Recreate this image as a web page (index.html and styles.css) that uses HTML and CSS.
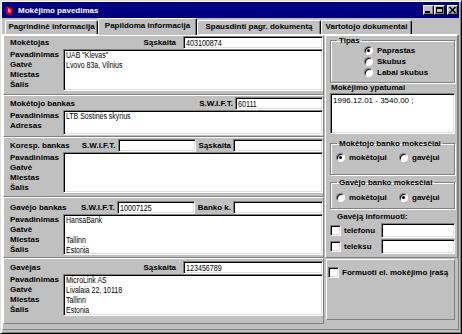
FILE: index.html
```html
<!DOCTYPE html>
<html lang="lt">

<head>
    <meta charset="UTF-8">
    <title>Mokėjimo pavedimas</title>
    <link rel="stylesheet" href="styles.css">
</head>

<body>

    <div class="window">

        <header class="titlebar">
            <svg class="app-icon" width="11" height="11" viewBox="0 0 11 11">
                <polygon points="0,5 5,1 5,9" fill="#0000c0" />
                <polygon points="4,1 10,4 8,10 3,9" fill="#e00000" />
                <polygon points="5,3 8,5 7,8 5,7" fill="#ff8080" />
            </svg>
            <span class="title">Mokėjimo pavedimas</span>
            <div class="caption">
                <span class="cbtn">
                    <svg width="9" height="8" viewBox="0 0 9 8"><rect x="1" y="5" width="5" height="2" fill="#000" /></svg>
                </span>
                <span class="cbtn">
                    <svg width="9" height="8" viewBox="0 0 9 8"><rect x="1.5" y="1.5" width="6" height="5" fill="none" stroke="#000" /><rect x="1" y="1" width="7" height="2" fill="#000" /></svg>
                </span>
                <span class="cbtn luk">
                    <svg width="9" height="8" viewBox="0 0 9 8"><path d="M1.5 1 L7.5 7 M7.5 1 L1.5 7" stroke="#000" stroke-width="1.6" /></svg>
                </span>
            </div>
        </header>

        <nav class="tabs">
            <span class="tab t1">Pagrindinė informacija</span>
            <span class="tab t2 valgt">Papildoma informacija</span>
            <span class="tab t3">Spausdinti pagr. dokumentą</span>
            <span class="tab t4">Vartotojo dokumentai</span>
        </nav>

        <div class="page">

            <!-- KAIRĖ -->
            <div class="left">

                <section class="panel s1">
                    <div class="head">
                        <b class="name">Mokėtojas</b>
                        <b class="lbl sask">Sąskaita</b>
                        <span class="field f140"><span class="v">403100874</span></span>
                    </div>
                    <div class="rows">
                        <div class="labels">
                            <div>Pavadinimas</div>
                            <div>Gatvė</div>
                            <div>Miestas</div>
                            <div>Šalis</div>
                        </div>
                        <div class="memo h42">
                            <div>UAB "Klevas"</div>
                            <div>Lvovo 83a, Vilnius</div>
                        </div>
                    </div>
                </section>

                <section class="panel s2">
                    <div class="head">
                        <b class="name">Mokėtojo bankas</b>
                        <b class="lbl swift">S.W.I.F.T.</b>
                        <span class="field f88"><span class="v">60111</span></span>
                    </div>
                    <div class="rows">
                        <div class="labels">
                            <div>Pavadinimas</div>
                            <div>Adresas</div>
                        </div>
                        <div class="memo h25">
                            <div>LTB Sostinės skyrius</div>
                        </div>
                    </div>
                </section>

                <section class="panel s3">
                    <div class="head">
                        <b class="name">Koresp. bankas</b>
                        <b class="lbl swift">S.W.I.F.T.</b>
                        <span class="field f78"></span>
                        <b class="lbl mid">Sąskaita</b>
                        <span class="field f90"></span>
                    </div>
                    <div class="rows">
                        <div class="labels">
                            <div>Pavadinimas</div>
                            <div>Gatvė</div>
                            <div>Miestas</div>
                            <div>Šalis</div>
                        </div>
                        <div class="memo h41"></div>
                    </div>
                </section>

                <section class="panel s4">
                    <div class="head">
                        <b class="name">Gavėjo bankas</b>
                        <b class="lbl swift">S.W.I.F.T.</b>
                        <span class="field f78"><span class="v">10007125</span></span>
                        <b class="lbl mid">Banko k.</b>
                        <span class="field f90"></span>
                    </div>
                    <div class="rows">
                        <div class="labels">
                            <div>Pavadinimas</div>
                            <div>Gatvė</div>
                            <div>Miestas</div>
                            <div>Šalis</div>
                        </div>
                        <div class="memo h41">
                            <div>HansaBank</div>
                            <div></div>
                            <div>Tallinn</div>
                            <div>Estonia</div>
                        </div>
                    </div>
                </section>

                <section class="panel s5">
                    <div class="head">
                        <b class="name">Gavėjas</b>
                        <b class="lbl sask">Sąskaita</b>
                        <span class="field f140"><span class="v">123456789</span></span>
                    </div>
                    <div class="rows">
                        <div class="labels">
                            <div>Pavadinimas</div>
                            <div>Gatvė</div>
                            <div>Miestas</div>
                            <div>Šalis</div>
                        </div>
                        <div class="memo h42">
                            <div>MicroLink AS</div>
                            <div>Livalaia 22, 10118</div>
                            <div>Tallinn</div>
                            <div>Estonia</div>
                        </div>
                    </div>
                </section>

            </div>

            <!-- DEŠINĖ -->
            <div class="right">

                <div class="panel upper">

                    <fieldset class="group tipas">
                        <legend>Tipas</legend>
                        <div class="opt"><span class="radio on"></span>Paprastas</div>
                        <div class="opt"><span class="radio"></span>Skubus</div>
                        <div class="opt"><span class="radio"></span>Labai skubus</div>
                    </fieldset>

                    <b class="cap ypat">Mokėjimo ypatumai</b>
                    <div class="memo notes">1996.12.01 - 3540.00 ;</div>

                    <fieldset class="group mok1">
                        <legend>Mokėtojo banko mokesčiai</legend>
                        <div class="pair">
                            <div class="opt"><span class="radio on"></span>mokėtojui</div>
                            <div class="opt"><span class="radio"></span>gavėjui</div>
                        </div>
                    </fieldset>

                    <fieldset class="group mok2">
                        <legend>Gavėjo banko mokesčiai</legend>
                        <div class="pair">
                            <div class="opt"><span class="radio"></span>mokėtojui</div>
                            <div class="opt"><span class="radio on"></span>gavėjui</div>
                        </div>
                    </fieldset>

                    <b class="cap inform">Gavėją informuoti:</b>
                    <div class="chkrow">
                        <span class="check"></span><b>telefonu</b>
                        <span class="field f73"></span>
                    </div>
                    <div class="chkrow">
                        <span class="check"></span><b>teleksu</b>
                        <span class="field f73"></span>
                    </div>

                </div>

                <div class="panel lower">
                    <div class="chkrow">
                        <span class="check"></span><b>Formuoti el. mokėjimo įrašą</b>
                    </div>
                </div>

            </div>

        </div>

    </div>

</body>

</html>
```

FILE: styles.css
```css
body {
    margin: 0;
    background: #c0c0c0;
    font-family: "Liberation Sans", Arial, sans-serif;
}

b {
    font-weight: bold;
}

.window {
    width: 462px;
    height: 334px;
    box-sizing: border-box;
    background: #c0c0c0;
    border: 1px solid;
    border-color: #dfdfdf #000 #000 #dfdfdf;
    box-shadow: inset 1px 1px #fff, inset -1px -1px #808080;
    padding: 1px 2px 3px 1px;
    display: flex;
    flex-direction: column;
    font-size: 8px;
}


/* TITLE */

.titlebar {
    height: 16px;
    background: #000080;
    color: #fff;
    display: flex;
    align-items: center;
    padding: 0 1px 0 1px;
}

.app-icon {
    margin-right: 4px;
}

.title {
    flex: 1;
    font-weight: bold;
    font-size: 8px;
}

.caption {
    display: flex;
}

.cbtn {
    width: 11px;
    height: 10px;
    box-sizing: border-box;
    background: #c0c0c0;
    border: 1px solid;
    border-color: #fff #000 #000 #fff;
    box-shadow: inset -1px -1px #808080;
    display: flex;
    align-items: center;
    justify-content: center;
}

.cbtn svg {
    display: block;
}

.luk {
    margin-left: 2px;
}


/* TABS */

.tabs {
    height: 16px;
    display: flex;
    align-items: flex-end;
    padding-left: 3px;
}

.tab {
    height: 14px;
    box-sizing: border-box;
    border: 1px solid;
    border-bottom: none;
    border-color: #fff #000 transparent #fff;
    box-shadow: inset -1px 0 #808080;
    border-radius: 2px 2px 0 0;
    font-weight: bold;
    line-height: 12px;
    text-align: center;
    white-space: nowrap;
}

.t1 { width: 93px; }
.t2 { width: 99px; }
.t3 { width: 124px; }
.t4 { width: 91px; }

.valgt {
    height: 17px;
    margin-bottom: -1px;
    line-height: 14px;
    background: #c0c0c0;
    position: relative;
    z-index: 1;
}


/* PAGE */

.page {
    flex: 1;
    display: flex;
    gap: 1px;
    border: 1px solid;
    border-color: #fff #808080 #808080 #fff;
}

.left {
    flex: none;
    width: 321px;
    display: flex;
    flex-direction: column;
}

.panel {
    box-sizing: border-box;
    border: 1px solid;
    border-color: #fff #808080 #808080 #fff;
}

.s1 { height: 60px; }
.s2 { height: 42px; padding-top: 1px; }
.s3 { height: 60px; padding-top: 1px; }
.s4 { height: 61px; padding-top: 3px; }
.s5 { height: 66px; padding-top: 2px; }

.head {
    height: 13px;
    display: flex;
    align-items: center;
    padding-left: 6px;
}

.name {
    flex: 1;
    white-space: nowrap;
}

.lbl {
    white-space: nowrap;
}

.sask { margin-right: 7px; }
.swift { margin-right: 2px; }
.mid { margin: 0 2px 0 3px; }

.field {
    flex: none;
    height: 13px;
    box-sizing: border-box;
    background: #fff;
    border: 1px solid;
    border-color: #808080 #fff #fff #808080;
    box-shadow: inset 1px 1px #000, inset -1px -1px #dfdfdf;
    padding: 1px 0 0 2px;
    font-size: 8.5px;
    font-weight: normal;
    line-height: 10px;
    overflow: hidden;
}

.v {
    display: inline-block;
    white-space: nowrap;
    transform: scaleX(0.84);
    transform-origin: 0 0;
}

.f140 { width: 140px; }
.f88 { width: 88px; }
.f78 { width: 78px; }
.f90 { width: 90px; }
.f73 { width: 74px; height: 15px; }

.rows {
    display: flex;
}

.labels {
    width: 59px;
    box-sizing: border-box;
    padding: 1px 0 0 6px;
    font-weight: bold;
    line-height: 10px;
    white-space: nowrap;
}

.memo {
    flex: 1;
    box-sizing: border-box;
    background: #fff;
    border: 1px solid;
    border-color: #808080 #fff #fff #808080;
    box-shadow: inset 1px 1px #000, inset -1px -1px #dfdfdf;
    padding: 0 0 0 2px;
    font-size: 8.5px;
    line-height: 10px;
    overflow: hidden;
}

.memo div {
    height: 10px;
    white-space: nowrap;
    transform: scaleX(0.82);
    transform-origin: 0 0;
}

.h42 { height: 42px; }
.h41 { height: 41px; }
.h25 { height: 25px; }


/* RIGHT */

.right {
    flex: 1;
    min-width: 0;
    display: flex;
    flex-direction: column;
}

.upper {
    height: 223px;
    display: flex;
    flex-direction: column;
}

.lower {
    height: 61px;
    margin: 1px 3px 0 1px;
    padding-top: 4px;
}

.group {
    margin: 0 2px 0 4px;
    padding: 0 4px 4px;
    border: 1px solid #808080;
    box-shadow: inset 1px 1px #fff, 1px 1px #fff;
    min-width: 0;
}

.group legend {
    margin-left: 2px;
    padding: 0 2px;
    font-weight: bold;
    line-height: 9px;
    white-space: nowrap;
}

.opt {
    height: 11px;
    display: flex;
    align-items: center;
    font-weight: bold;
    white-space: nowrap;
}

.tipas .opt {
    padding-left: 29px;
}

.radio {
    flex: none;
    width: 9px;
    height: 9px;
    box-sizing: border-box;
    border-radius: 50%;
    background: #fff;
    border: 1px solid;
    border-color: #808080 #fff #fff #808080;
    box-shadow: inset 1px 1px #000;
    margin-right: 4px;
    display: flex;
    align-items: center;
    justify-content: center;
}

.radio.on::after {
    content: "";
    width: 3px;
    height: 3px;
    border-radius: 50%;
    background: #000;
}

.cap {
    display: block;
    line-height: 10px;
}

.ypat {
    margin: 0 0 0 5px;
}

.notes {
    flex: none;
    height: 41px;
    margin: 0 2px 0 4px;
    padding: 2px 0 0 2px;
    font-size: 8px;
}

.mok1 {
    margin-top: 5px;
    padding-top: 4px;
    padding-bottom: 11px;
}

.mok2 {
    margin-top: 3px;
    padding-top: 5px;
    padding-bottom: 5px;
}

.pair {
    display: flex;
}

.pair .opt {
    padding-left: 1px;
}

.pair .opt:first-child {
    width: 63px;
    box-sizing: border-box;
}

.inform {
    margin: 3px 0 0 11px;
}

.chkrow {
    display: flex;
    align-items: center;
    height: 15px;
    margin: 1px 0 0 4px;
    font-weight: bold;
}

.chkrow b {
    flex: 1;
    white-space: nowrap;
}

.check {
    flex: none;
    width: 11px;
    height: 11px;
    box-sizing: border-box;
    background: #fff;
    border: 1px solid;
    border-color: #808080 #fff #fff #808080;
    box-shadow: inset 1px 1px #000, inset -1px -1px #dfdfdf;
    margin-right: 3px;
}

.chkrow .field {
    margin-right: 2px;
}

.lower .chkrow {
    margin-left: 1px;
}
```
